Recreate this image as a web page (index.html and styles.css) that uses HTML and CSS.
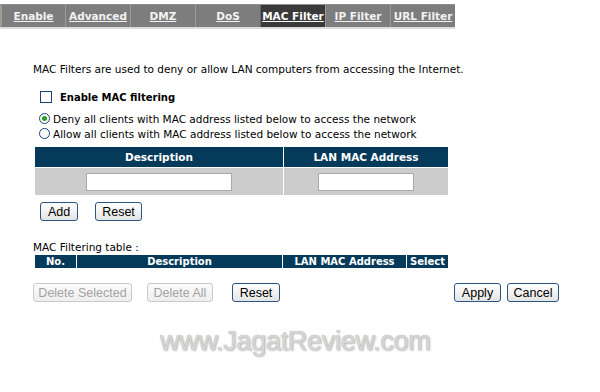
FILE: index.html
```html
<!DOCTYPE html>
<html lang="en">

<head>
    <meta charset="UTF-8">
    <meta name="viewport" content="width=device-width, initial-scale=1.0">
    <title>MAC Filter</title>
    <link rel="stylesheet" href="styles.css">
</head>

<body>
	<div class="tabs">
		<a class="tab">Enable</a>
		<a class="tab">Advanced</a>
		<a class="tab">DMZ</a>
		<a class="tab">DoS</a>
		<a class="tab active">MAC Filter</a>
		<a class="tab">IP Filter</a>
		<a class="tab">URL Filter</a>
	</div>

	<div class="content">
		<p class="intro">MAC Filters are used to deny or allow LAN computers from accessing the Internet.</p>

		<div class="enable">
			<span class="check"></span>
			<b>Enable MAC filtering</b>
		</div>

		<div class="radios">
			<div class="radio-row"><span class="radio on"></span>Deny all clients with MAC address listed below to access the network</div>
			<div class="radio-row"><span class="radio"></span>Allow all clients with MAC address listed below to access the network</div>
		</div>

		<table class="grid add-table">
			<tr>
				<th class="c-desc">Description</th>
				<th class="c-mac">LAN MAC Address</th>
			</tr>
			<tr class="entry">
				<td><span class="field f-desc"></span></td>
				<td><span class="field f-mac"></span></td>
			</tr>
		</table>

		<div class="btn-row first">
			<button class="btn b-add">Add</button>
			<button class="btn b-reset">Reset</button>
		</div>

		<p class="caption">MAC Filtering table :</p>

		<table class="grid list-table">
			<tr>
				<th class="c-no">No.</th>
				<th class="c-ldesc">Description</th>
				<th class="c-lmac">LAN MAC Address</th>
				<th class="c-sel">Select</th>
			</tr>
		</table>

		<div class="btn-row bottom">
			<button class="btn off b-dsel">Delete Selected</button>
			<button class="btn off b-dall">Delete All</button>
			<button class="btn b-reset2">Reset</button>
			<div class="spacer"></div>
			<button class="btn b-apply">Apply</button>
			<button class="btn b-cancel">Cancel</button>
		</div>
	</div>

	<div class="mark">www.JagatReview.com</div>
</body>

</html>
```

FILE: styles.css
```css
* {
    margin: 0;
    padding: 0;
    box-sizing: border-box;
}
body {
    background: #fff;
    font-family: Verdana, "DejaVu Sans", sans-serif;
    font-size: 10.5px;
    color: #000;
    width: 600px;
    height: 392px;
    overflow: hidden;
}
.tabs {
    display: flex;
    width: 455px;
    height: 25px;
    margin-top: 4px;
    background: #7d7d7d;
    border-top: 1px solid #8e8e8e;
    border-bottom: 2px solid #dcdcdc;
}
.tab {
    width: 65px;
    display: flex;
    align-items: center;
    justify-content: center;
    color: #f2f2f2;
    font-weight: bold;
    font-size: 10.5px;
    text-decoration: underline;
    border-left: 1px solid #9b9b9b;
}
.tab:first-child {
    border-left: 2px solid #9b9b9b;
}
.tab.active {
    background: #3a3a3a;
    color: #fff;
    border-left: 1px solid #666;
}
.content {
    padding-left: 33px;
    width: 560px;
}
.intro {
    margin-top: 33px;
    line-height: 14px;
}
.enable {
    display: flex;
    align-items: center;
    margin-top: 14px;
    margin-left: 7px;
    height: 14px;
    font-size: 10px;
}
.check {
    width: 12px;
    height: 12px;
    border: 1px solid #1c3f78;
    background: #fff;
    margin-right: 8px;
}
.radios {
    margin-top: 7px;
    margin-left: 6px;
}
.radio-row {
    display: flex;
    align-items: center;
    height: 15px;
}
.radio {
    width: 11px;
    height: 11px;
    border-radius: 50%;
    border: 1px solid #1c3f78;
    margin-right: 3px;
    position: relative;
    background: #fff;
}
.radio.on::after {
    content: "";
    position: absolute;
    left: 2px;
    top: 2px;
    width: 5px;
    height: 5px;
    border-radius: 50%;
    background: #21a121;
}
.grid {
    border-collapse: separate;
    border-spacing: 1px;
    margin-left: 1px;
    width: 415px;
    margin-top: 5px;
}
.grid th {
    background: #063a5b;
    color: #fff;
    font-weight: bold;
    font-size: 10.5px;
    text-align: center;
}
.add-table th {
    height: 20px;
}
.c-desc { width: 248px; }
.entry td {
    background: #cccccc;
    height: 27px;
    text-align: center;
    vertical-align: middle;
}
.field {
    display: inline-block;
    height: 18px;
    background: #fff;
    border: 1px solid #a9a9a9;
    vertical-align: middle;
}
.f-desc { width: 146px; }
.f-mac { width: 96px; }
.btn-row {
    display: flex;
    align-items: center;
}
.btn-row.first {
    margin-top: 6px;
    margin-left: 7px;
    gap: 17px;
}
.btn {
    height: 19px;
    font-family: Arial, "Liberation Sans", sans-serif;
    font-size: 12.5px;
    color: #000;
    background: linear-gradient(#ffffff, #e4e4e4);
    border: 1px solid #2c5586;
    border-radius: 3px;
    padding: 0;
    white-space: nowrap;
}
.btn.off {
    color: #a3a3a3;
    border-color: #c9c9c9;
    background: linear-gradient(#fbfbfb, #eeeeee);
}
.b-add { width: 38px; }
.b-reset { width: 47px; }
.caption {
    margin-top: 19px;
    line-height: 14px;
}
.list-table {
    margin-top: 0;
}
.list-table th {
    height: 13px;
    line-height: 12px;
    font-size: 10px;
}
.c-no { width: 41px; }
.c-ldesc { width: 205px; }
.c-lmac { width: 123px; }
.btn-row.bottom {
    margin-top: 14px;
    width: 526px;
}
.b-dsel { width: 99px; }
.b-dall { width: 66px; margin-left: 15px; }
.b-reset2 { width: 48px; margin-left: 19px; }
.spacer { flex: 1; }
.b-apply { width: 47px; }
.b-cancel { width: 52px; margin-left: 6px; }
.mark {
    margin-top: 24px;
    margin-left: 160px;
    font-family: Arial, "Liberation Sans", sans-serif;
    font-size: 27px;
    color: #d6d6d6;
    text-shadow: 0 0 1px #a8a8a8, 1px 1px 2px #bdbdbd;
    letter-spacing: -0.3px;
}
```
